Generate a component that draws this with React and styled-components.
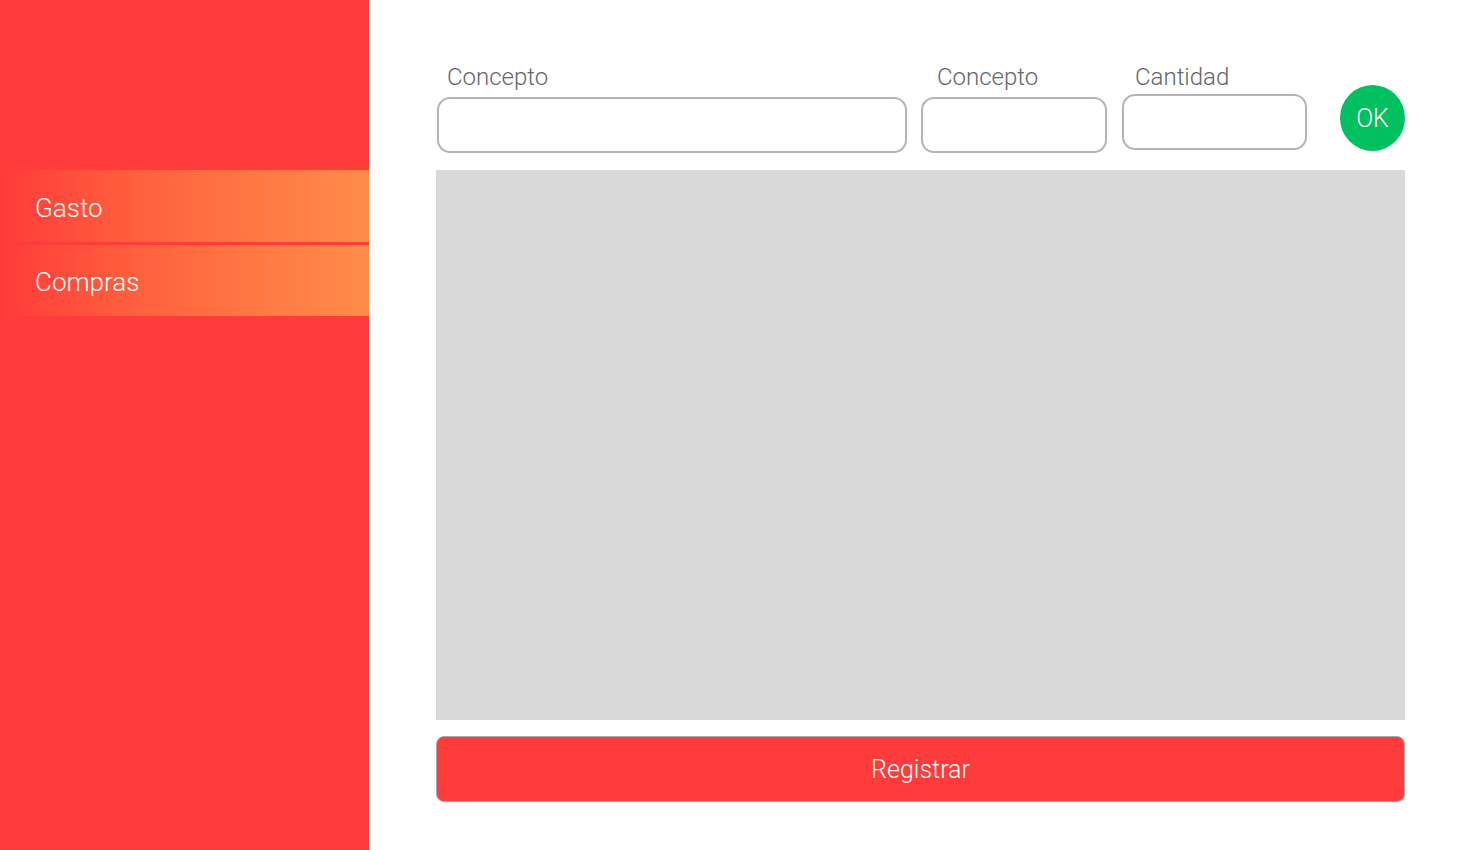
import React from "react";
import styled, { createGlobalStyle } from "styled-components";

const Global = createGlobalStyle`
  html, body { margin: 0; padding: 0; background: #fff; }
  body { font-family: Roboto, "Open Sans", sans-serif; }
  * { box-sizing: border-box; }
`;

const Page = styled.div`
  display: flex;
  width: 1480px;
  height: 850px;
  overflow: hidden;
`;

const Sidebar = styled.nav`
  width: 369px;
  flex: none;
  background: #ff3b3b;
  display: flex;
  flex-direction: column;
  gap: 3px;
  padding-top: 170px;
`;

const NavItem = styled.div`
  height: ${(p) => p.$h}px;
  display: flex;
  align-items: center;
  padding-left: 35px;
  padding-top: 3px;
  color: #fff;
  font-size: 26px;
  font-weight: 300;
  background: linear-gradient(90deg, #ff3a3a 0%, #ff5a3c 30%, #ff7543 65%, #ff8c4a 100%);
`;

const Main = styled.main`
  flex: 1;
  min-width: 0;
  display: flex;
  flex-direction: column;
  padding: 62px 75px 0 67px;
`;

const FormRow = styled.div`
  display: flex;
  align-items: flex-start;
  height: 108px;
`;

const Field = styled.div`
  display: flex;
  flex-direction: column;
  flex: none;
  width: ${(p) => p.$w}px;
  margin-left: ${(p) => p.$ml || 0}px;
`;

const Label = styled.label`
  color: #666;
  font-size: 24px;
  font-weight: 300;
  line-height: 30px;
  padding-left: ${(p) => p.$pl || 10}px;
  margin-bottom: ${(p) => p.$mb || 5}px;
`;

const Input = styled.input`
  height: 56px;
  width: 100%;
  border: 2px solid #b4b4b4;
  border-radius: 13px;
  background: #fff;
  outline: none;
`;

const OkButton = styled.button`
  flex: none;
  width: 65px;
  height: 66px;
  border-radius: 50%;
  border: none;
  background: #00c060;
  color: #fff;
  font-family: Roboto, sans-serif;
  font-size: 25px;
  font-weight: 300;
  margin-left: 33px;
  margin-top: 23px;
  padding: 0;
`;

const Board = styled.div`
  height: 550px;
  background: #d9d9d9;
`;

const Submit = styled.button`
  margin-top: 16px;
  height: 66px;
  background: #ff3b3b;
  border: 1px solid #a8a8a8;
  border-radius: 8px;
  color: #fff;
  font-family: Roboto, sans-serif;
  font-size: 25px;
  font-weight: 300;
`;

export default function App() {
  return (
    <Page>
      <Global />
      <Sidebar>
        <NavItem $h={72}>Gasto</NavItem>
        <NavItem $h={71}>Compras</NavItem>
      </Sidebar>
      <Main>
        <FormRow>
          <Field $w={470} $ml={1}>
            <Label $pl={10}>Concepto</Label>
            <Input />
          </Field>
          <Field $w={186} $ml={14}>
            <Label $pl={16} $mb={5}>Concepto</Label>
            <Input />
          </Field>
          <Field $w={185} $ml={15}>
            <Label $pl={13} $mb={2}>Cantidad</Label>
            <Input />
          </Field>
          <OkButton>OK</OkButton>
        </FormRow>
        <Board />
        <Submit>Registrar</Submit>
      </Main>
    </Page>
  );
}
